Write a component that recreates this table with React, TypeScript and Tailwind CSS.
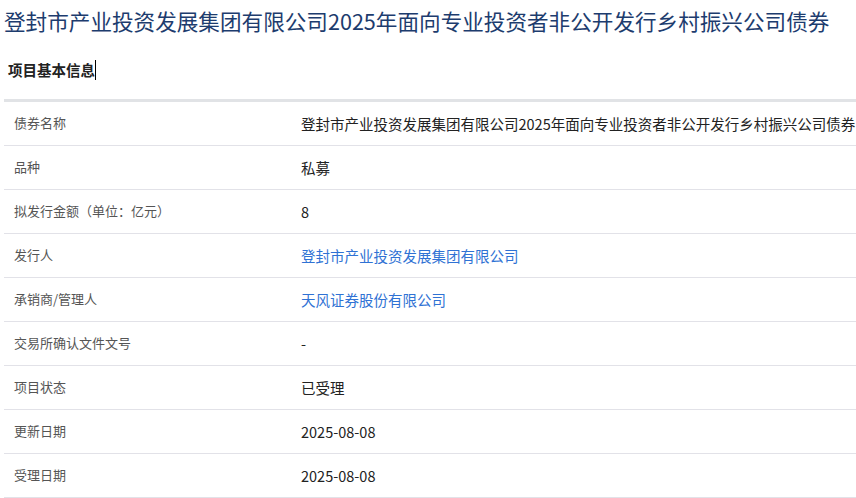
const rows: { label: string; value: string; link?: boolean }[] = [
  { label: "债券名称", value: "登封市产业投资发展集团有限公司2025年面向专业投资者非公开发行乡村振兴公司债券" },
  { label: "品种", value: "私募" },
  { label: "拟发行金额（单位：亿元）", value: "8" },
  { label: "发行人", value: "登封市产业投资发展集团有限公司", link: true },
  { label: "承销商/管理人", value: "天风证券股份有限公司", link: true },
  { label: "交易所确认文件文号", value: "-" },
  { label: "项目状态", value: "已受理" },
  { label: "更新日期", value: "2025-08-08" },
  { label: "受理日期", value: "2025-08-08" },
];

export default function App() {
  return (
    <div className="w-[856px] h-[498px] overflow-hidden bg-white font-['Noto_Sans_CJK_SC','Noto_Sans',sans-serif]">
      <h1 className="pl-[4px] pt-[6px] text-[21.6px] leading-[30px] text-[#1d3c6e] whitespace-nowrap">
        登封市产业投资发展集团有限公司2025年面向专业投资者非公开发行乡村振兴公司债券
      </h1>

      <div className="mt-[24px] pl-[8px] flex items-center h-[20px]">
        <span className="text-[14.5px] leading-[20px] font-bold text-[#222]">项目基本信息</span>
        <span className="w-px h-[20px] bg-black" />
      </div>

      <div className="mt-[19px] ml-[4px] h-[3px] bg-[#e1e3e6]" />

      <div className="ml-[4px]">
        {rows.map((r) => (
          <div key={r.label} className="flex h-[44px] border-b border-[#e2e2e8]">
            <div className="w-[287px] pl-[10px] flex items-center pb-[2px] text-[13px] text-[#555] whitespace-nowrap">
              {r.label}
            </div>
            <div
              className={`flex-1 pl-[10px] flex items-center pt-[1px] text-[14.5px] whitespace-nowrap ${
                r.link ? "text-[#2f72d4]" : "text-[#222]"
              }`}
            >
              {r.value}
            </div>
          </div>
        ))}
      </div>
    </div>
  );
}
